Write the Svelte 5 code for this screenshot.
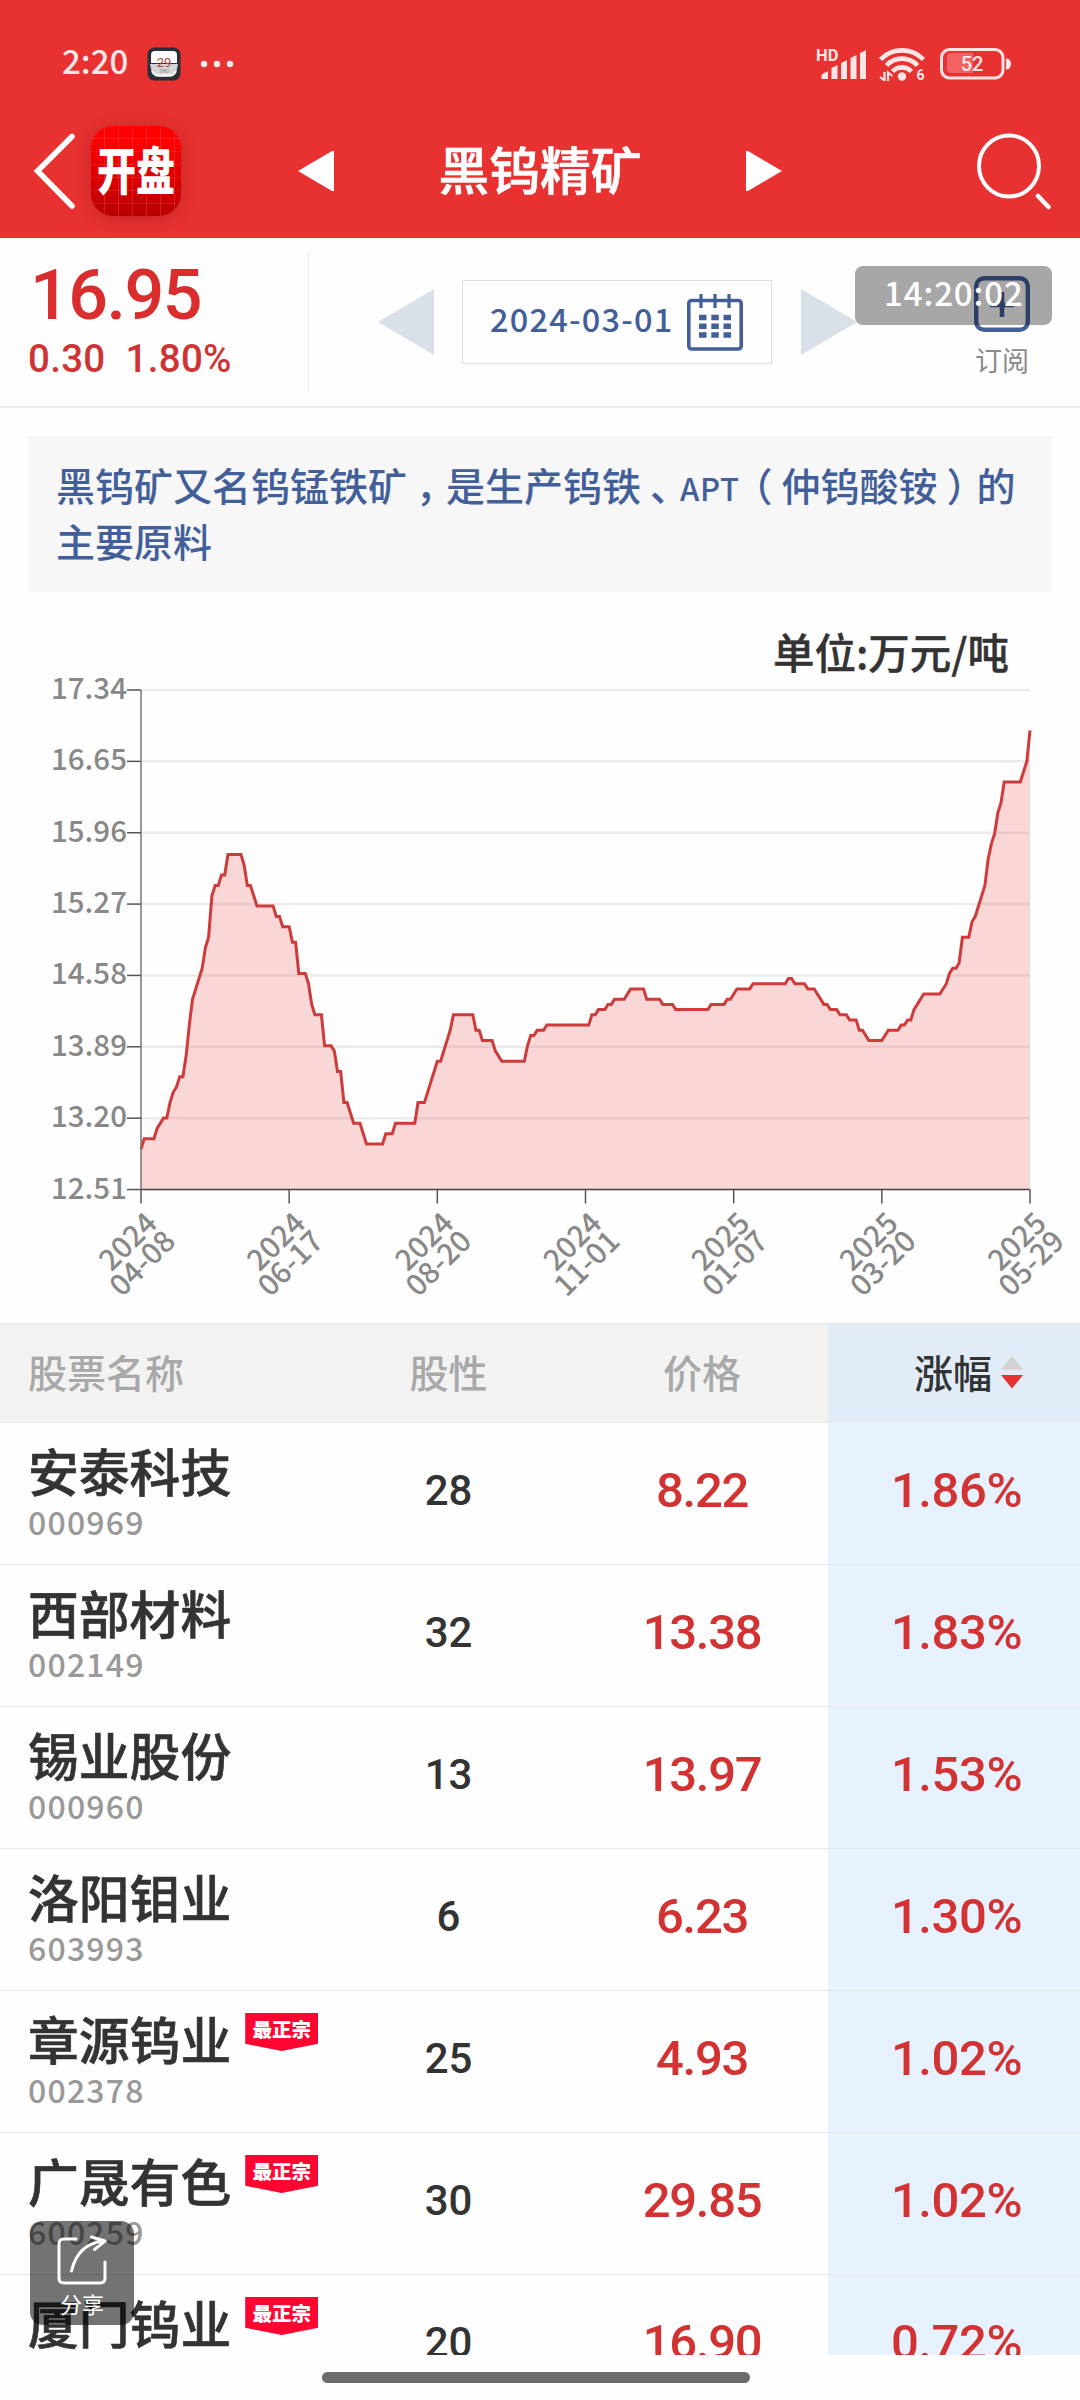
<script>

let quote = {
    price: "16.95",
    change: "0.30",
    percent: "1.80%",
    date: "2024-03-01"
};

let stocks = [
    { name: "安泰科技", code: "000969", nature: 28, price: "8.22",  percent: "1.86%", tag: "" },
    { name: "西部材料", code: "002149", nature: 32, price: "13.38", percent: "1.83%", tag: "" },
    { name: "锡业股份", code: "000960", nature: 13, price: "13.97", percent: "1.53%", tag: "" },
    { name: "洛阳钼业", code: "603993", nature: 6,  price: "6.23",  percent: "1.30%", tag: "" },
    { name: "章源钨业", code: "002378", nature: 25, price: "4.93",  percent: "1.02%", tag: "最正宗" },
    { name: "广晟有色", code: "600259", nature: 30, price: "29.85", percent: "1.02%", tag: "最正宗" },
    { name: "厦门钨业", code: "",       nature: 20, price: "16.90", percent: "0.72%", tag: "最正宗" }
];

// [trading day, price], only the days on which the slope changes
let series = [
    [0, 12.9], [1, 13], [4, 13], [5, 13.1], [7, 13.2], [8, 13.2], [9, 13.35], [10, 13.45],
    [11, 13.5], [12, 13.6], [13, 13.6], [14, 13.8], [15, 14.1], [16, 14.35], [19, 14.65],
    [20, 14.85], [21, 14.95], [22, 15.35], [23, 15.45], [24, 15.45], [25, 15.55], [26, 15.55],
    [27, 15.75], [31, 15.75], [32, 15.65], [33, 15.45], [34, 15.45], [36, 15.25], [41, 15.25],
    [42, 15.15], [43, 15.15], [44, 15.05], [46, 15.05], [47, 14.9], [48, 14.9], [49, 14.6],
    [51, 14.6], [52, 14.5], [53, 14.3], [54, 14.2], [56, 14.2], [57, 13.9], [59, 13.9],
    [60, 13.85], [61, 13.65], [62, 13.65], [63, 13.35], [64, 13.35], [66, 13.15], [68, 13.15],
    [70, 12.95], [75, 12.95], [76, 13.05], [78, 13.05], [79, 13.15], [85, 13.15], [86, 13.35],
    [88, 13.35], [92, 13.75], [93, 13.75], [96, 14.05], [97, 14.2], [103, 14.2], [104, 14.05],
    [105, 14.05], [106, 13.95], [109, 13.95], [110, 13.85], [112, 13.75], [119, 13.75],
    [120, 13.9], [121, 14], [122, 14], [123, 14.05], [125, 14.05], [126, 14.1], [139, 14.1],
    [140, 14.2], [141, 14.2], [142, 14.25], [144, 14.25], [145, 14.3], [146, 14.3],
    [147, 14.35], [150, 14.35], [152, 14.45], [156, 14.45], [157, 14.35], [161, 14.35],
    [162, 14.3], [165, 14.3], [166, 14.25], [176, 14.25], [177, 14.3], [181, 14.3],
    [182, 14.35], [183, 14.35], [185, 14.45], [189, 14.45], [190, 14.5], [200, 14.5],
    [201, 14.55], [202, 14.55], [203, 14.5], [206, 14.5], [207, 14.45], [209, 14.45],
    [212, 14.3], [213, 14.3], [214, 14.25], [216, 14.25], [217, 14.2], [219, 14.2],
    [220, 14.15], [222, 14.15], [223, 14.05], [224, 14.05], [226, 13.95], [230, 13.95],
    [232, 14.05], [235, 14.05], [236, 14.1], [237, 14.1], [238, 14.15], [239, 14.15],
    [240, 14.25], [243, 14.4], [248, 14.4], [250, 14.5], [251, 14.6], [252, 14.65],
    [253, 14.65], [254, 14.7], [255, 14.95], [257, 14.95], [258, 15.1], [259, 15.15],
    [262, 15.45], [263, 15.7], [264, 15.85], [265, 15.95], [266, 16.15], [267, 16.25],
    [268, 16.45], [273, 16.45], [275, 16.65], [276, 16.95]
];

let yLabels = ["17.34", "16.65", "15.96", "15.27", "14.58", "13.89", "13.20", "12.51"];
let xLabels = [
    ["2024", "04-08"],
    ["2024", "06-17"],
    ["2024", "08-20"],
    ["2024", "11-01"],
    ["2025", "01-07"],
    ["2025", "03-20"],
    ["2025", "05-29"]
];

let plot = { left: 141, right: 1030, top: 26, bottom: 525.5 };
let max = 17.34;
let min = 12.51;

let getX = function (day) {
    return plot.left + day / 276 * (plot.right - plot.left);
}

let getY = function (value) {
    return plot.top + (max - value) / (max - min) * (plot.bottom - plot.top);
}

let line = series.map(function (p) {
    return getX(p[0]).toFixed(1) + "," + getY(p[1]).toFixed(1);
}).join(" ");

let area = plot.left + "," + plot.bottom + " " + line + " " + plot.right + "," + plot.bottom;

</script>

<div class="screen">
    <header>
        <div class="status">
            <span class="clock">2:20</span>
            <svg class="calendar-app" width="34" height="34" viewBox="0 0 34 34">
                <rect x="0.5" y="0.5" width="33" height="33" rx="7" fill="#2b2d38"/>
                <path d="M4 8q0-4 4-4h18q4 0 4 4v8H4z" fill="#fff"/>
                <path d="M3 17h28l-1 5q-1 8-8 8H12q-7 0-8-8z" fill="#d4d4d4"/>
                <path d="M5 24q2 4 6 4h12q4 0 6-4" fill="none" stroke="#f4f4f4" stroke-width="2"/>
                <text x="17" y="20" text-anchor="middle" font-size="13" fill="#b8403a">29</text>
                <text x="17" y="26" text-anchor="middle" font-size="4.500" fill="#777">THU</text>
            </svg>
            <svg width="34" height="8" viewBox="0 0 34 8" fill="#ffe9e9">
                <circle cx="4" cy="4" r="3.2"/><circle cx="17" cy="4" r="3.2"/><circle cx="30" cy="4" r="3.2"/>
            </svg>
            <div class="status-right">
                <svg width="52" height="42" viewBox="0 0 52 42" fill="#ffe6e6">
                    <text class="hd" x="0" y="17.500">HD</text>
                    <path d="M5.500 36v-3.500q1-3 6.500-4v7.500zM15.500 36V25l6-3v14zM25 36V20l6-3v19zM34.500 36V15l6-3v24zM44 36V10l6-3v29z"/>
                </svg>
                <svg class="wifi" width="50" height="34" viewBox="0 0 50 34" fill="none" stroke="#ffe6e6" stroke-width="4.6">
                    <path d="M1.5 12.5A30 30 0 0 1 44.5 12.5"/>
                    <path d="M7.5 18.5A21 21 0 0 1 38.5 18.5"/>
                    <path d="M13.5 24.5A13 13 0 0 1 32.5 24.5"/>
                    <circle cx="23" cy="29.5" r="4.2" fill="#ffe6e6" stroke="none"/>
                    <path d="M5.5 25v8.500L1 30M9 34v-8.500L13.500 29" stroke-width="2.200"/>
                    <text class="wifi-six" x="37.500" y="32.500">6</text>
                </svg>
                <svg class="battery" width="72" height="32" viewBox="0 0 72 32">
                    <rect x="1.5" y="1.5" width="61.500" height="28.500" rx="8" fill="none" stroke="#ffe2e2" stroke-width="3"/>
                    <path d="M11 5h22v20H11q-4 0-4-4V9q0-4 4-4z" fill="#f16262"/>
                    <path d="M66 10.500q5 0 5 5.500t-5 5.500z" fill="#ffe2e2"/>
                    <text x="32" y="22.500" text-anchor="middle">52</text>
                </svg>
            </div>
        </div>

        <nav>
            <svg class="back" width="42" height="78" viewBox="0 0 42 78">
                <path d="M39 4.500L4.500 39l34.500 35" fill="none" stroke="#fff" stroke-width="5.500" stroke-linecap="round"/>
            </svg>
            <div class="logo"><span>开盘</span></div>
            <svg class="prev" width="36" height="42" viewBox="0 0 36 42"><path d="M36 1v40h-2L0 21 34 1z" fill="#fff"/></svg>
            <h1>黑钨精矿</h1>
            <svg class="next" width="36" height="42" viewBox="0 0 36 42"><path d="M0 1v40h2L36 21 2 1z" fill="#fff"/></svg>
            <svg class="search" width="76" height="78" viewBox="0 0 76 78" fill="none" stroke="#fff" stroke-linecap="round">
                <ellipse cx="33" cy="34" rx="30" ry="30.500" stroke-width="4"/>
                <path d="M62 64l10.500 11" stroke-width="4.500"/>
            </svg>
        </nav>
    </header>

    <section class="quote">
        <div class="quote-values">
            <div class="quote-price">{quote.price}</div>
            <div class="quote-change"><span>{quote.change}</span><span>{quote.percent}</span></div>
        </div>
        <svg class="day-prev" width="56" height="66" viewBox="0 0 56 66"><path d="M56 0v66L0 33z" fill="#dae0e7"/></svg>
        <div class="date-box">
            <span>{quote.date}</span>
            <svg width="56" height="58" viewBox="0 0 56 58" fill="none" stroke="#435f99">
                <rect x="1.800" y="7.500" width="52.400" height="48.500" rx="3" stroke-width="3.600"/>
                <path d="M14 1v14M28 1v14M42 1v14" stroke-width="3.200"/>
                <path d="M12 24.500h7.500M24.300 24.500h7.500M36.500 24.500H44M12 33.300h7.500M24.300 33.300h7.500M36.500 33.300H44M12 42h7.500M24.300 42h7.500M36.500 42H44" stroke-width="5.600"/>
            </svg>
        </div>
        <svg class="day-next" width="56" height="66" viewBox="0 0 56 66"><path d="M0 0v66l56-33z" fill="#dae0e7"/></svg>
        <div class="subscribe">
            <svg width="56" height="56" viewBox="0 0 56 56" fill="none" stroke="#435f99">
                <rect x="2.200" y="2.200" width="51.600" height="51.600" rx="8" stroke-width="4.400"/>
                <path d="M28 16v25M16 29h24" stroke-width="4.600"/>
            </svg>
            <span>订阅</span>
        </div>
        <div class="clock-toast">14:20:02</div>
    </section>

    <section class="summary">
        黑钨矿又名钨锰铁矿<span class="mark">，</span>是生产钨铁<span class="mark">、</span><span class="latin">APT</span><span class="open">（</span>仲钨酸铵<span class="mark">）</span>的主要原料
    </section>

    <section class="chart">
        <div class="unit">单位:万元/吨</div>
        <svg width="1080" height="659" viewBox="0 0 1080 659">
            {#each yLabels as label, i}
                <path class="grid" class:base={i === 7} d="M{plot.left} {plot.top + i * 71.36}H{plot.right}"/>
            {/each}
            <polygon points={area} fill="#e63232" fill-opacity="0.19"/>
            <polyline points={line} fill="none" stroke="#cf3a3a" stroke-width="3"/>
            <path d="M{plot.left} {plot.top}V{plot.bottom}" stroke="#777" stroke-width="1.500"/>
            <path d="M{plot.left} {plot.bottom}H{plot.right}" stroke="#4a4040" stroke-width="1.400"/>
            {#each yLabels as label, i}
                <path class="tick" d="M127 {plot.top + i * 71.36}H141"/>
                <text x="127" y={plot.top + i * 71.36 + 9} text-anchor="end">{label}</text>
            {/each}
            {#each xLabels as label, i}
                <path class="tick" d="M{plot.left + i * 148.17} {plot.bottom}v14"/>
                <g transform="translate({159 + i * 148.17} 561) rotate(-45)">
                    <text text-anchor="end">{label[0]}</text>
                    <text text-anchor="end" y="25.5">{label[1]}</text>
                </g>
            {/each}
        </svg>
    </section>

    <section class="stocks">
        <div class="row head">
            <div class="name">股票名称</div>
            <div class="nature">股性</div>
            <div class="price">价格</div>
            <div class="percent">
                涨幅
                <svg width="22" height="34" viewBox="0 0 22 34">
                    <path d="M11 0l11 13.500H0z" fill="#d3d3d3"/>
                    <path d="M0 19h22L11 32.500z" fill="#e63232"/>
                </svg>
            </div>
        </div>
        {#each stocks as stock}
            <div class="row">
                <div class="name">
                    <div class="title">
                        {stock.name}
                        {#if stock.tag}
                            <span class="tag">{stock.tag}</span>
                        {/if}
                    </div>
                    <div class="code">{stock.code}</div>
                </div>
                <div class="nature">{stock.nature}</div>
                <div class="price">{stock.price}</div>
                <div class="percent">{stock.percent}</div>
            </div>
        {/each}
    </section>

    <div class="share">
        <svg width="50" height="50" viewBox="0 0 50 50" fill="none" stroke="#fff" stroke-width="3" stroke-linecap="round" stroke-linejoin="round">
            <path d="M19 4H7q-5 0-5 5v34q0 5 5 5h36q5 0 5-5V27"/>
            <path d="M14.500 36C18 21 27 8 47 6M34.500 2l13.500 4-10.500 8.500"/>
        </svg>
        <span>分享</span>
    </div>

    <div class="home-bar"></div>
</div>

<style>

:global(body) {
    margin: 0;
    background-color: #fefefe;
}

.screen,
.screen * {
    box-sizing: border-box;
}

.screen {
    position: relative;
    width: 1080px;
    height: 2400px;
    overflow: hidden;
    display: flex;
    flex-direction: column;
    font-family: "Noto Sans CJK SC", sans-serif;
    font-weight: 500;
    color: #333333;
    background-color: #fefefe;
}

svg {
    display: block;
    flex-shrink: 0;
}

header {
    height: 238px;
    flex-shrink: 0;
    background-color: #e83131;
}

.status {
    height: 104px;
    padding: 24px 68px 0 62px;
    display: flex;
    align-items: center;
    color: #ffe6e6;
}

.clock {
    width: 85px;
    font-size: 33px;
    line-height: 40px;
    margin-bottom: 9px;
}

.calendar-app {
    margin-right: 19px;
}

.calendar-app text {
    font-family: Roboto, sans-serif;
    font-weight: 400;
}

.status-right {
    margin-left: auto;
    display: flex;
    align-items: center;
}

.hd {
    font-size: 16.5px;
    font-weight: 700;
    font-family: Roboto, sans-serif;
}

.wifi {
    margin-left: 11px;
}

.wifi-six {
    stroke: none;
    fill: #ffe6e6;
    font: 700 14px Roboto, sans-serif;
}

.battery {
    margin-left: 11px;
}

.battery text {
    fill: #ffe6e6;
    font: 500 20px Roboto, sans-serif;
}

nav {
    height: 134px;
    padding-left: 33px;
    display: flex;
    align-items: center;
}

.logo {
    width: 90px;
    height: 90px;
    margin-left: 16px;
    padding-bottom: 6px;
    display: flex;
    align-items: center;
    justify-content: center;
    border-radius: 22px;
    box-shadow: 0 2px 14px rgba(120, 20, 20, 0.35);
    background-image:
        repeating-linear-gradient(90deg, transparent 0 13px, rgba(255, 120, 120, 0.25) 13px 14px),
        repeating-linear-gradient(transparent 0 12px, rgba(255, 120, 120, 0.2) 12px 13px),
        linear-gradient(#ff0000 15%, #b80000);
}

.logo span {
    font-size: 39px;
    line-height: 44px;
    font-weight: 900;
    color: #ffffff;
    transform: scaleY(1.32);
}

.prev {
    margin-left: 117px;
}

h1 {
    margin: 0 0 6px;
    width: 412px;
    text-align: center;
    font-size: 50.8px;
    line-height: 60px;
    font-weight: 500;
    color: #ffffff;
    -webkit-text-stroke: 0.7px #ffffff;
}

.search {
    margin-left: 194px;
}

.quote {
    position: relative;
    height: 170px;
    flex-shrink: 0;
    display: flex;
    border-bottom: 2px solid #ebebeb;
}

.quote-values {
    width: 309px;
    height: 140px;
    margin-top: 14px;
    padding: 13px 0 0 28px;
    border-right: 1px solid #e8e8e8;
    font-family: Roboto, sans-serif;
    font-weight: 500;
    color: #da2e2e;
}

.quote-price {
    padding-left: 2px;
    font-size: 70px;
    line-height: 60px;
    letter-spacing: -1.5px;
}

.quote-change {
    margin-top: 14px;
    display: flex;
    gap: 20px;
    font-size: 38.5px;
    line-height: 40px;
    letter-spacing: 0.3px;
    color: #cf3434;
}

.day-prev,
.day-next {
    margin-top: 51px;
}

.day-prev {
    margin-left: 69px;
}

.date-box {
    width: 310px;
    height: 84px;
    margin: 42px 29px 0 28px;
    padding: 0 28px 0 27px;
    display: flex;
    align-items: center;
    justify-content: space-between;
    border: 1px solid #dfdfdf;
    color: #435f99;
}

.date-box span {
    margin-bottom: 8px;
    font-size: 32.5px;
    line-height: 40px;
    letter-spacing: 1.2px;
    white-space: nowrap;
}

.subscribe {
    width: 56px;
    margin: 38px 0 0 117px;
    text-align: center;
}

.subscribe span {
    display: block;
    margin-top: 8px;
    font-size: 27px;
    line-height: 40px;
    font-weight: 400;
    color: #8a8a8a;
}

.clock-toast {
    position: absolute;
    top: 28px;
    left: 855px;
    width: 197px;
    height: 59px;
    padding-left: 29px;
    border-radius: 8px;
    font-size: 33px;
    line-height: 52px;
    letter-spacing: 0.9px;
    color: #ffffff;
    background-color: rgba(0, 0, 0, 0.34);
}

.summary {
    height: 156px;
    flex-shrink: 0;
    margin: 28px 28px 0;
    padding: 22px 29px 0 28px;
    font-size: 39px;
    line-height: 53px;
    color: #435f99;
    background-color: #f7f7f8;
}

.mark {
    margin: 0 -9px 0 9px;
}

.open {
    margin: 0 9px 0 -6px;
}

.latin {
    font-size: 31px;
    letter-spacing: 0.6px;
}

.chart {
    height: 731px;
    flex-shrink: 0;
    padding-top: 26px;
}

.chart svg {
    margin-top: -20px;
}

.unit {
    padding-right: 71px;
    text-align: right;
    font-size: 41.5px;
    line-height: 66px;
    -webkit-text-stroke: 0.4px #333333;
}

.chart text {
    font-size: 29.5px;
    fill: #888888;
}

.grid {
    stroke: #ececec;
    stroke-width: 2.5;
}

.base {
    stroke: none;
}

.tick {
    stroke: #555555;
    stroke-width: 1.5;
}

.stocks {
    height: 1032px;
    flex-shrink: 0;
    overflow: hidden;
    border-top: 1px solid #e8e8e8;
}

.row {
    height: 142px;
    display: grid;
    grid-template-columns: 347px 203px 278px 252px;
    border-bottom: 1px solid #e8e8e8;
}

.row > div {
    display: flex;
    align-items: center;
    justify-content: center;
}

.row > .name {
    padding-left: 28px;
    flex-direction: column;
    align-items: flex-start;
    justify-content: flex-start;
}

.title {
    display: flex;
    margin-top: 16px;
    font-size: 50.8px;
    line-height: 62px;
    white-space: nowrap;
    -webkit-text-stroke: 0.6px #333333;
}

.tag {
    width: 73px;
    height: 38px;
    margin: 6px 0 0 14px;
    text-align: center;
    font-size: 19.5px;
    line-height: 31px;
    font-weight: 900;
    color: #ffffff;
    background-color: #ff0532;
    clip-path: polygon(0 0, 100% 0, 100% 81%, 50% 100%, 0 81%);
    -webkit-text-stroke: 0;
}

.code {
    font-size: 32px;
    line-height: 40px;
    letter-spacing: 1.2px;
    color: #999999;
}

.nature,
.price,
.percent {
    font-family: Roboto, "Noto Sans CJK SC", sans-serif;
    font-size: 49px;
    color: #d23232;
}

.row > .nature,
.row > .price,
.row > .percent {
    padding-bottom: 7px;
}

.row > .nature {
    font-size: 42px;
    color: #333333;
}

.row > .price {
    padding-left: 26px;
    letter-spacing: -1.3px;
}

.percent {
    background-color: #e6f2ff;
}

.row > .percent {
    padding-left: 5px;
    letter-spacing: -0.4px;
}

.head {
    height: 99px;
    background-color: #f2f2f2;
}

.row.head > div {
    justify-content: center;
    padding-bottom: 5px;
    font-family: "Noto Sans CJK SC", sans-serif;
    font-size: 39px;
    line-height: 60px;
    letter-spacing: 0;
    color: #a8a8a8;
}

.row.head > .percent {
    gap: 9px;
    padding-left: 29px;
    color: #333333;
    background-color: #e1ecf7;
}

.head svg {
    margin-top: 4px;
}

.share {
    position: absolute;
    left: 30px;
    top: 2221px;
    width: 104px;
    height: 104px;
    padding-top: 14px;
    display: flex;
    flex-direction: column;
    align-items: center;
    border-radius: 13px;
    background-color: rgba(0, 0, 0, 0.55);
}

.share span {
    margin-top: 1px;
    font-size: 22px;
    line-height: 34px;
    font-weight: 400;
    color: #ffffff;
}

.home-bar {
    width: 428px;
    height: 11px;
    margin: 17px auto 0 322px;
    border-radius: 6px;
    background-color: #6b6b6b;
}

</style>
